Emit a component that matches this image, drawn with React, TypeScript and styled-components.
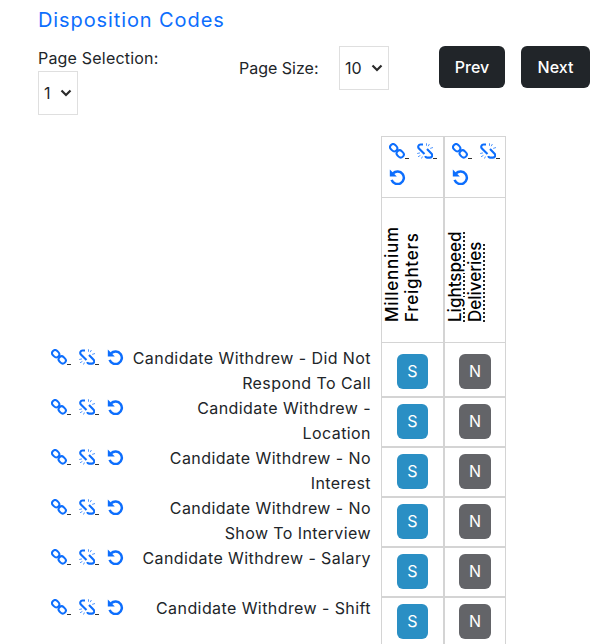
import React from "react";
import styled, { createGlobalStyle } from "styled-components";

const Global = createGlobalStyle`
  html, body { margin: 0; padding: 0; height: 644px; overflow: hidden; background: #fff; }
  body { font-family: "Inter", "Liberation Sans", sans-serif; color: #212529; }
`;

const Page = styled.div`
  padding: 7px 0 0 38px;
  width: 614px;
  box-sizing: border-box;
`;
const Title = styled.h1`
  margin: 0;
  font-size: 20px;
  line-height: 26px;
  font-weight: 400;
  letter-spacing: 0.9px;
  color: #0d6efd;
`;
const Controls = styled.div`
  display: flex;
  align-items: flex-start;
  margin-top: 13px;
  height: 89px;
`;
const PageSelection = styled.div`
  flex: none;
  width: 201px;
  display: flex;
  flex-direction: column;
  align-items: flex-start;
`;
const Label = styled.span`
  font-size: 16px;
  line-height: 25px;
  white-space: nowrap;
  letter-spacing: 0.2px;
`;
const SizeLabel = styled(Label)`
  flex: none;
  width: 100px;
  line-height: 45px;
  letter-spacing: 0;
`;
const SelectBox = styled.div<{ $w: number }>`
  flex: none;
  width: ${(p) => p.$w}px;
  height: 44px;
  box-sizing: border-box;
  border: 1px solid #dfdfdf;
  display: flex;
  align-items: center;
  justify-content: space-between;
  padding: 0 5px;
  font-size: 16px;
`;
const Buttons = styled.div`
  flex: none;
  display: flex;
  gap: 16px;
  margin-left: 50px;
`;
const DarkButton = styled.button<{ $w: number }>`
  width: ${(p) => p.$w}px;
  height: 42px;
  border: 0;
  border-radius: 6px;
  background: #212529;
  color: #fff;
  font: 500 16px "Inter", sans-serif;
  padding: 0;
`;
const Table = styled.table`
  border-collapse: separate;
  border-spacing: 0;
  table-layout: fixed;
  width: 468px;
  margin-top: 1px;
`;
const HeadCell = styled.td`
  border: 1px solid #d4d4d4;
  padding: 6px 0 0 7px;
  vertical-align: top;
  box-sizing: border-box;
`;
const NameHead = styled.td`
  padding: 0;
`;
const IconWrap = styled.div`
  display: flex;
  flex-wrap: wrap;
  gap: 10px 8px;
`;
const IconLink = styled.a`
  display: inline-flex;
  align-items: flex-end;
  color: #0d6efd;
  text-decoration: none;
`;
const Under = styled.i`
  display: block;
  width: 4px;
  height: 1px;
  background: #333;
`;
const RotCell = styled.td`
  border: 1px solid #d4d4d4;
  border-top: 0;
  height: 145px;
  padding: 0 0 20px 0;
  vertical-align: bottom;
  box-sizing: border-box;
`;
const Rotated = styled.div<{ $ls: number }>`
  writing-mode: vertical-rl;
  transform: rotate(180deg);
  font-size: 17px;
  font-weight: 500;
  line-height: 20px;
  letter-spacing: ${(p) => p.$ls}px;
  color: #000;
  width: 40px;
`;
const Dotted = styled.abbr`
  text-decoration: underline dotted;
`;
const NameCell = styled.td<{ $first?: boolean }>`
  padding: ${(p) => (p.$first ? "4px" : "0")} 10px 0 13px;
  height: ${(p) => (p.$first ? 54 : 50)}px;
  box-sizing: border-box;
  vertical-align: top;
`;
const NameRow = styled.div`
  display: flex;
  align-items: flex-start;
`;
const RowIcons = styled(IconWrap)`
  flex-wrap: nowrap;
  flex: none;
  padding-top: 2px;
`;
const NameText = styled.div`
  flex: 1;
  text-align: right;
  font-size: 16px;
  line-height: 25px;
  letter-spacing: 0.42px;
  margin: -1px 0 0 8px;
`;
const BtnCell = styled.td<{ $first?: boolean }>`
  border: 1px solid #d4d4d4;
  border-top: ${(p) => (p.$first ? "0" : "1px solid #d4d4d4")};
  padding: 0;
  vertical-align: middle;
  box-sizing: border-box;
`;
const Code = styled.div<{ $bg: string; $w: number; $first?: boolean }>`
  display: flex;
  align-items: center;
  justify-content: center;
  width: ${(p) => p.$w}px;
  height: 35px;
  margin: ${(p) => (p.$first ? "5px" : "0")} auto 2px;
  border-radius: 6px;
  background: ${(p) => p.$bg};
  color: #fff;
  font-size: 16px;
  font-weight: 400;
`;

const LinkIcon = () => (
  <svg width="16" height="16" viewBox="0 0 16 16" fill="none" stroke="currentColor" strokeWidth="2">
    <rect x="0.9" y="1.7" width="7.6" height="6" rx="3" transform="rotate(45 4.7 4.7)" />
    <rect x="7.4" y="7.9" width="7.6" height="6" rx="3" transform="rotate(45 11.2 10.9)" />
  </svg>
);
const UnlinkIcon = () => (
  <svg width="16" height="16" viewBox="0 0 16 16" fill="none" stroke="currentColor">
    <path d="M6 1.5H3.5a2.3 2.3 0 0 0-1.6 3.9L7.5 11" strokeWidth="2.1" />
    <path d="M10 6l4.6 4.7a2.3 2.3 0 0 1-1.6 3.9H10a2.3 2.3 0 0 1-1.9-1.4" strokeWidth="2.1" />
    <path d="M9.5 .3v2.5M12.4 1l-1.2 2.2M16 4.5l-2.8.9M.2 10.5l2.8-.6M1 13.8l2.4-1.4M4.5 15.5l.9-2" strokeWidth="0.9" opacity=".8" />
  </svg>
);
const UndoIcon = () => (
  <svg width="17" height="16" viewBox="0 0 17 16" fill="none" stroke="currentColor">
    <path d="M4 4.4A6.3 6.3 0 1 1 2.6 10.8" strokeWidth="2.5" />
    <path d="M0.8 .4V7.4H7.8Z" fill="currentColor" stroke="none" />
  </svg>
);
const Chevron = () => (
  <svg width="12" height="8" viewBox="0 0 12 8" fill="none" stroke="#2b2b2b" strokeWidth="2.2">
    <path d="M1.5 1.5L6 6l4.5-4.5" />
  </svg>
);
const Icons = () => (
  <>
    <IconLink><LinkIcon /><Under /></IconLink>
    <IconLink><UnlinkIcon /><Under /></IconLink>
    <IconLink><UndoIcon /></IconLink>
  </>
);

const rows = [
  "Candidate Withdrew - Did Not Respond To Call",
  "Candidate Withdrew - Location",
  "Candidate Withdrew - No Interest",
  "Candidate Withdrew - No Show To Interview",
  "Candidate Withdrew - Salary",
  "Candidate Withdrew - Shift",
];

export default function App() {
  return (
    <Page>
      <Global />
      <Title>Disposition Codes</Title>
      <Controls>
        <PageSelection>
          <Label>Page Selection:</Label>
          <SelectBox $w={40}>1<Chevron /></SelectBox>
        </PageSelection>
        <SizeLabel>Page Size:</SizeLabel>
        <SelectBox $w={50}>10<Chevron /></SelectBox>
        <Buttons>
          <DarkButton $w={66}>Prev</DarkButton>
          <DarkButton $w={69}>Next</DarkButton>
        </Buttons>
      </Controls>
      <Table>
        <colgroup>
          <col style={{ width: 343 }} />
          <col style={{ width: 63 }} />
          <col style={{ width: 62 }} />
        </colgroup>
        <tbody>
          <tr style={{ height: 62 }}>
            <NameHead />
            <HeadCell><IconWrap><Icons /></IconWrap></HeadCell>
            <HeadCell><IconWrap><Icons /></IconWrap></HeadCell>
          </tr>
          <tr>
            <NameHead />
            <RotCell><Rotated $ls={0.75}>Millennium Freighters</Rotated></RotCell>
            <RotCell><Rotated $ls={0}><Dotted title="Lightspeed Deliveries">Lightspeed Deliveries</Dotted></Rotated></RotCell>
          </tr>
          {rows.map((r, i) => (
            <tr key={r}>
              <NameCell $first={i === 0}>
                <NameRow>
                  <RowIcons><Icons /></RowIcons>
                  <NameText>{r}</NameText>
                </NameRow>
              </NameCell>
              <BtnCell $first={i === 0}><Code $bg="#2a8fc4" $w={31} $first={i === 0}>S</Code></BtnCell>
              <BtnCell $first={i === 0}><Code $bg="#636468" $w={32} $first={i === 0}>N</Code></BtnCell>
            </tr>
          ))}
        </tbody>
      </Table>
    </Page>
  );
}
